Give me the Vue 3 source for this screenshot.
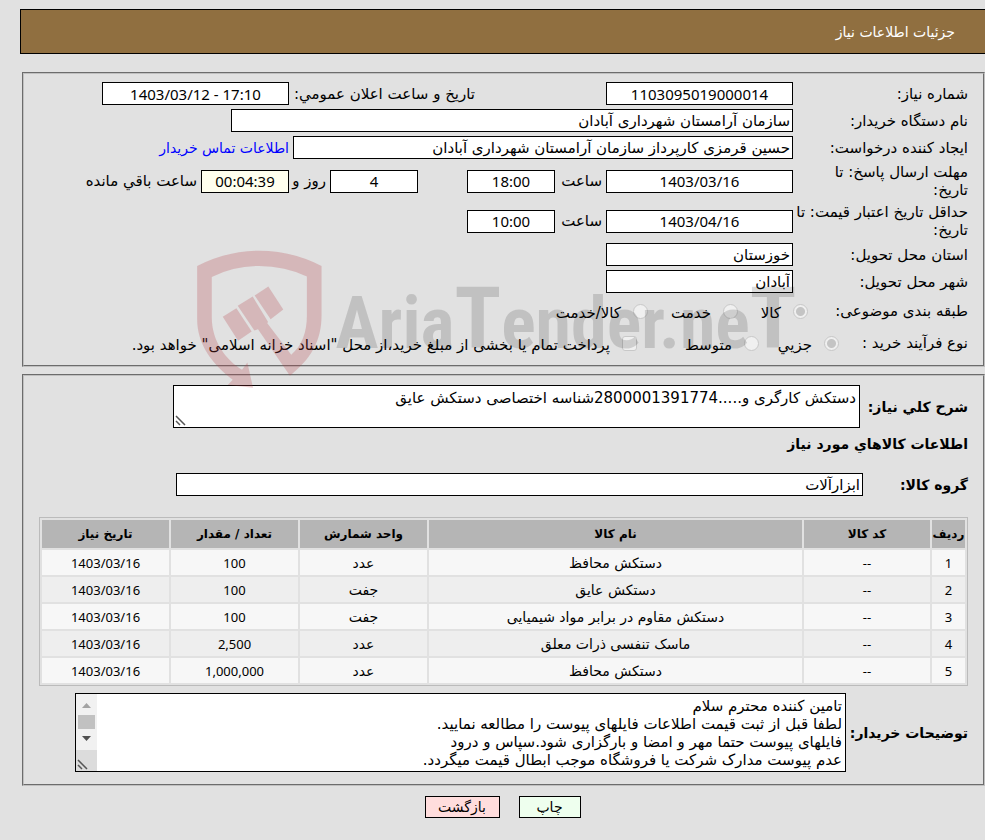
<script setup>
const items = [
  { id: 1, name: 'دستکش محافظ', unit: 'عدد', count: '100' },
  { id: 2, name: 'دستکش عایق', unit: 'جفت', count: '100' },
  { id: 3, name: 'دستکش مقاوم در برابر مواد شیمیایی', unit: 'جفت', count: '100' },
  { id: 4, name: 'ماسک تنفسی ذرات معلق', unit: 'عدد', count: '2,500' },
  { id: 5, name: 'دستکش محافظ', unit: 'عدد', count: '1,000,000' }
]
const needDate = '1403/03/16'
const summary = 'دستکش کارگری و.....2800001391774شناسه اختصاصی دستکش عایق'
const buyerNotes = [
  'تامین کننده محترم سلام',
  'لطفا قبل از ثبت قیمت اطلاعات فایلهای پیوست را مطالعه نمایید.',
  'فایلهای پیوست حتما مهر و امضا و بارگزاری شود.سپاس و درود',
  'عدم پیوست مدارک شرکت یا فروشگاه موجب ابطال قیمت میگردد.'
].join('\n')
</script>

<template>
  <div class="page" dir="rtl">
    <header class="title-bar"><h1>جزئیات اطلاعات نیاز</h1></header>

    <section class="panel details">
      <div class="row">
        <label class="name" for="need-no">شماره نیاز:</label>
        <input id="need-no" class="num mid" dir="ltr" readonly value="1103095019000014">
        <label class="announce" for="announce">تاریخ و ساعت اعلان عمومي:</label>
        <input id="announce" class="num mid" dir="ltr" readonly value="1403/03/12 - 17:10">
      </div>
      <div class="row">
        <label class="name" for="org">نام دستگاه خریدار:</label>
        <input id="org" class="org" readonly value="سازمان آرامستان شهرداری آبادان">
      </div>
      <div class="row">
        <label class="name" for="creator">ایجاد کننده درخواست:</label>
        <input id="creator" class="creator" readonly value="حسین قرمزی کارپرداز سازمان آرامستان شهرداری آبادان">
        <a href="#contact">اطلاعات تماس خریدار</a>
      </div>
      <div class="row tall">
        <label class="name" for="reply-date">مهلت ارسال پاسخ: تا<br>تاریخ:</label>
        <input id="reply-date" class="num mid" dir="ltr" readonly value="1403/03/16">
        <label class="hour" for="reply-hour">ساعت</label>
        <input id="reply-hour" class="num short" dir="ltr" readonly value="18:00">
        <input id="days" class="num short days" dir="ltr" readonly value="4">
        <label class="days-label" for="days">روز و</label>
        <input id="remaining" class="num short cream" dir="ltr" readonly value="00:04:39">
        <label for="remaining">ساعت باقي مانده</label>
      </div>
      <div class="row tall">
        <label class="name" for="price-date">حداقل تاریخ اعتبار قیمت: تا<br>تاریخ:</label>
        <input id="price-date" class="num mid" dir="ltr" readonly value="1403/04/16">
        <label class="hour" for="price-hour">ساعت</label>
        <input id="price-hour" class="num short" dir="ltr" readonly value="10:00">
      </div>
      <div class="row">
        <label class="name" for="province">استان محل تحویل:</label>
        <input id="province" class="mid" readonly value="خوزستان">
      </div>
      <div class="row">
        <label class="name" for="city">شهر محل تحویل:</label>
        <input id="city" class="mid" readonly value="آبادان">
      </div>
      <div class="row choices">
        <span class="name category">طبقه بندی موضوعی:</span>
        <label class="opt w70"><input type="radio" name="cat" disabled checked><span>کالا</span></label>
        <label class="opt w90"><input type="radio" name="cat" disabled><span>خدمت</span></label>
        <label class="opt"><input type="radio" name="cat" disabled><span>کالا/خدمت</span></label>
      </div>
      <div class="row choices">
        <span class="name process">نوع فرآیند خرید :</span>
        <label class="opt w80"><input type="radio" name="proc" disabled checked><span>جزيي</span></label>
        <label class="opt w122"><input type="radio" name="proc" disabled><span>متوسط</span></label>
        <label class="opt"><input type="checkbox" disabled><span>پرداخت تمام یا بخشی از مبلغ خرید،از محل "اسناد خزانه اسلامی" خواهد بود.</span></label>
      </div>

      <div class="watermark" dir="ltr" aria-hidden="true">
        <svg viewBox="60 42 375 415" width="125" height="138">
          <path d="M60 90Q150 44 246 44Q345 44 434 90V240C434 315 402 370 339 420L243 280L232 284L182 210L227 182L273 258L271 262L343 357C375 330 390 290 390 240V122Q325 90 246 90Q170 90 104 123V245C104 315 145 372 195 402L211 380L228 456L152 448L167 432C105 385 60 325 60 250Z" />
          <path d="M137 243L178 217L224 287L183 315ZM233 179L274 152L319 221L281 250Z" />
        </svg>
        <span class="brand">Aria<span class="big">T</span>ender.ne<span class="big">T</span></span>
      </div>
    </section>

    <section class="panel goods">
      <div class="row">
        <label class="bold summary-name" for="summary">شرح کلي نیاز:</label>
        <div class="area summary">
          <textarea id="summary" readonly :value="summary"></textarea>
          <svg class="grip" viewBox="0 0 11 11" width="11" height="11"><path d="M1 1L10 10M1 6L5 10" /></svg>
        </div>
      </div>
      <h2>اطلاعات کالاهاي مورد نیاز</h2>
      <div class="row group">
        <label class="bold group-name" for="group">گروه کالا:</label>
        <input id="group" readonly value="ابزارآلات">
      </div>

      <table>
        <thead>
          <tr>
            <th class="c-row">ردیف</th>
            <th class="c-code">کد کالا</th>
            <th>نام کالا</th>
            <th class="c-mid">واحد شمارش</th>
            <th class="c-mid">تعداد / مقدار</th>
            <th class="c-mid">تاریخ نیاز</th>
          </tr>
        </thead>
        <tbody>
          <tr v-for="item in items" :key="item.id">
            <td class="figure">{{ item.id }}</td>
            <td class="figure">--</td>
            <td>{{ item.name }}</td>
            <td>{{ item.unit }}</td>
            <td class="figure">{{ item.count }}</td>
            <td class="figure" dir="ltr">{{ needDate }}</td>
          </tr>
        </tbody>
      </table>

      <div class="row notes-row">
        <label class="bold notes-name" for="notes">توضیحات خریدار:</label>
        <div class="area notes">
          <textarea id="notes" readonly :value="buyerNotes"></textarea>
          <svg class="bar" viewBox="0 0 21 77" width="21" height="77">
            <path fill="#f1f1f1" d="M0 0H21V56H0Z" />
            <path fill="#dcdcdc" d="M0 56H21V77H0Z" />
            <path fill="#a3a3a3" d="M6 14H15L10.5 9Z" />
            <path fill="#c1c1c1" d="M2 21H19V35H2Z" />
            <path fill="#505050" d="M6 42H15L10.5 47Z" />
          </svg>
          <svg class="grip" viewBox="0 0 11 11" width="11" height="11"><path d="M1 1L10 10M1 6L5 10" /></svg>
        </div>
      </div>
    </section>

    <div class="actions">
      <button type="button" class="print">چاپ</button>
      <button type="button" class="back">بازگشت</button>
    </div>
  </div>
</template>

<style>
body {
  background: #e1e1e1;
}
</style>

<style scoped>
.page {
  padding: 9px 0 22px 20px;
  font: 15px/18px "DejaVu Sans", sans-serif;
  color: #000;
}
.page * {
  box-sizing: border-box;
}
.title-bar {
  display: flex;
  align-items: center;
  height: 45px;
  padding: 0 30px;
  border: 1px solid #000;
  border-right: 0;
  background: #906f40;
}
h1 {
  margin: 0;
  font-size: 14px;
  font-weight: 400;
  color: #fff;
}
.panel {
  position: relative;
  margin: 0 0 0 2px;
  padding: 8px 15px;
  border: 2px groove #c0c0c0;
}
.details {
  margin-top: 18px;
  display: flex;
  flex-direction: column;
  gap: 4px;
  padding-bottom: 8px;
}
.row {
  display: flex;
  align-items: center;
  gap: 4px;
  min-height: 23px;
  white-space: nowrap;
}
.tall {
  min-height: 36px;
}
.row label,
.name {
  flex: none;
}
.name {
  width: 171px;
}
input:not([type]),
textarea {
  font: inherit;
  color: inherit;
  border: 1px solid #000;
  border-radius: 0;
  background: #fff;
  outline: none;
}
input:not([type]) {
  height: 23px;
  padding: 0 2px;
  min-width: 0;
}
input.num:not([type]),
.figure {
  font-family: "Noto Sans", sans-serif;
  text-align: center;
}
.mid {
  width: 187px;
}
.org {
  width: 562px;
}
.creator {
  width: 500px;
}
.short {
  width: 88px;
}
input.cream:not([type]) {
  background: #ffffee;
}
.announce {
  width: 182px;
  margin-right: 127px;
}
.hour {
  width: 43px;
}
.days {
  margin-right: 45px;
}
.days-label {
  width: 33px;
}
a {
  font-size: 14px;
  color: #00f;
  text-decoration: none;
}
.choices {
  min-height: 28px;
  gap: 0;
}
.category {
  width: 160px;
}
.process {
  width: 129px;
}
.opt {
  display: flex;
  align-items: center;
  gap: 12px;
}
.opt span {
  padding-top: 4px;
}
.w70 { width: 70px; }
.w80 { width: 80px; }
.w90 { width: 90px; }
.w122 { width: 122px; }
input[type="radio"],
input[type="checkbox"] {
  appearance: none;
  flex: none;
  width: 15px;
  height: 15px;
  margin: 0;
  border: 1px solid #c8c8c8;
  border-radius: 50%;
  background: #f0f0f0;
}
input[type="checkbox"] {
  border-radius: 3px;
}
input[type="radio"]:checked {
  background: radial-gradient(circle, #c4c4c4 4px, #efefef 5px);
}
.watermark {
  position: absolute;
  top: 176px;
  left: 0;
  right: 0;
  display: flex;
  justify-content: center;
  gap: 14px;
  padding-right: 14px;
  pointer-events: none;
  z-index: 1;
}
.watermark svg {
  fill: rgba(181, 61, 69, 0.25);
}
.brand {
  font: 700 72px/148px "Roboto Condensed", Roboto, sans-serif;
  color: rgba(0, 0, 0, 0.14);
}
.big {
  font-size: 86px;
  line-height: 1;
}
.goods {
  margin-top: 7px;
  padding: 9px 15px 12px;
}
.bold,
h2 {
  font-size: 14px;
  font-weight: 700;
}
h2 {
  margin: 7px 0 20px;
  line-height: 18px;
}
.area {
  position: relative;
  display: flex;
}
textarea {
  width: 100%;
  padding: 3px;
  resize: none;
  overflow: hidden;
}
.summary {
  width: 687px;
  height: 43px;
}
.notes {
  width: 771px;
  height: 79px;
}
.grip {
  position: absolute;
  left: 2px;
  bottom: 2px;
  fill: none;
  stroke: #555;
  stroke-width: 1.5;
}
.bar {
  position: absolute;
  left: 1px;
  top: 1px;
}
.summary-name {
  width: 104px;
}
.notes-name {
  width: 118px;
}
.group-name {
  width: 101px;
}
.group input {
  width: 687px;
}
table {
  width: 100%;
  margin: 21px 0 7px;
  table-layout: fixed;
  border: 1px solid #bbb;
  border-collapse: separate;
  border-spacing: 2px;
  font-size: 14px;
  text-align: center;
}
th {
  height: 28px;
  padding: 0;
  font-size: 12px;
  background: #b5b5b5;
}
td {
  height: 25px;
  padding: 0;
  background: #eee;
}
td.figure {
  font-size: 13px;
}
tr:nth-child(odd) td {
  background: #f7f7f7;
}
.c-row {
  width: 33px;
}
.c-code {
  width: 126px;
}
.c-mid {
  width: 127px;
}
.actions {
  display: flex;
  justify-content: center;
  gap: 19px;
  padding-top: 10px;
}
button {
  height: 22px;
  padding: 0;
  border: 1px solid #000;
  border-radius: 0;
  font: inherit;
  font-size: 14px;
  line-height: 20px;
  color: #000;
}
.print {
  width: 62px;
  background: #efe;
}
.back {
  width: 75px;
  background: #fdd;
}
</style>
